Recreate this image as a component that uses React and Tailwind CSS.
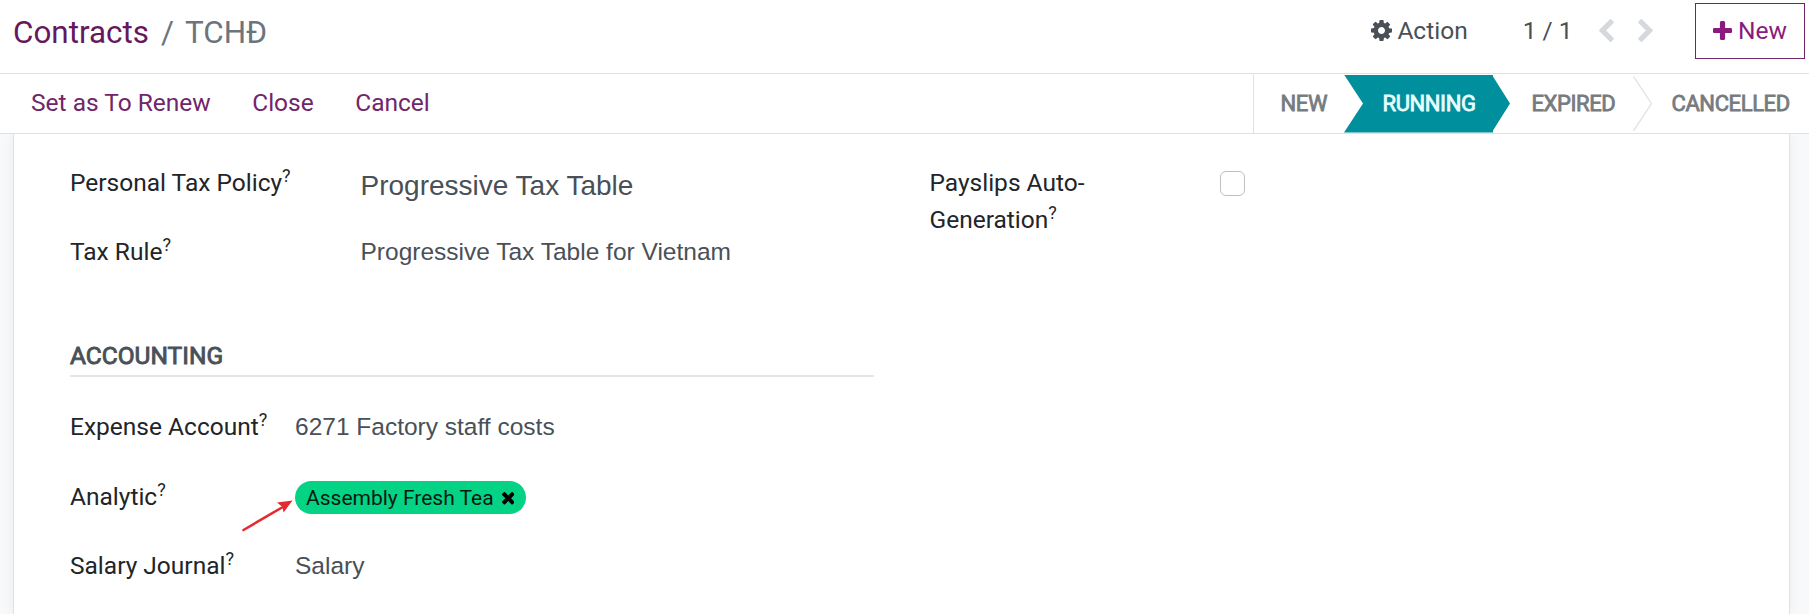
const icons = {
  cog: {
    viewBox: '128 128 1536 1536',
    d: 'M1152 896q0-106-75-181t-181-75-181 75-75 181 75 181 181 75 181-75 75-181zm512-109v222q0 12-8 23t-20 13l-185 28q-19 54-39 91 35 50 107 138 10 12 10 25t-9 23q-27 37-99 108t-94 71q-12 0-26-9l-138-108q-44 23-91 38-16 136-29 186-7 28-36 28h-222q-14 0-24.5-8.5t-11.5-21.5l-28-184q-49-16-90-37l-141 107q-10 9-25 9-14 0-25-11-126-114-165-168-7-10-7-23 0-12 8-23 15-21 51-66.5t54-70.5q-27-50-41-99l-183-27q-13-2-21-12.5t-8-23.5v-222q0-12 8-23t19-13l186-28q14-46 39-92-40-57-107-138-10-12-10-24 0-10 9-23 26-36 98.5-107.5t94.5-71.5q13 0 26 10l138 107q44-23 91-38 16-136 29-186 7-28 36-28h222q14 0 24.5 8.5t11.5 21.5l28 184q49 16 90 37l142-107q9-9 24-9 13 0 25 10 129 119 165 170 7 8 7 22 0 12-8 23-15 21-51 66.5t-54 70.5q26 50 41 98l183 28q13 2 21 12.5t8 23.5z',
  },
  plus: {
    viewBox: '192 128 1408 1408',
    d: 'M1600 736v192q0 40-28 68t-68 28h-416v416q0 40-28 68t-68 28h-192q-40 0-68-28t-28-68v-416h-416q-40 0-68-28t-28-68v-192q0-40 28-68t68-28h416v-416q0-40 28-68t68-28h192q40 0 68 28t28 68v416h416q40 0 68 28t28 68z',
  },
  times: {
    viewBox: '302 366 1188 1188',
    d: 'M1490 1322q0 40-28 68l-136 136q-28 28-68 28t-68-28l-294-294-294 294q-28 28-68 28t-68-28l-136-136q-28-28-28-68t28-68l294-294-294-294q-28-28-28-68t28-68l136-136q28-28 68-28t68 28l294 294 294-294q28-28 68-28t68 28l136 136q28 28 28 68t-28 68l-294 294 294 294q28 28 28 68z',
  },
  left: {
    viewBox: '410 26 1036 1612',
    d: 'M1427 301l-531 531 531 531q19 19 19 45t-19 45l-166 166q-19 19-45 19t-45-19l-742-742q-19-19-19-45t19-45l742-742q19-19 45-19t45 19l166 166q19 19 19 45t-19 45z',
  },
  right: {
    viewBox: '346 26 1036 1612',
    d: 'M1363 877l-742 742q-19 19-45 19t-45-19l-166-166q-19-19-19-45t19-45l531-531-531-531q-19-19-19-45t19-45l166-166q19-19 45-19t45 19l742 742q19 19 19 45t-19 45z',
  },
};

const Icon = ({ name, className }) => (
  <svg viewBox={icons[name].viewBox} className={`shrink-0 ${className}`} fill="currentColor" aria-hidden="true">
    <path d={icons[name].d} />
  </svg>
);

const Help = () => <sup className="relative top-[-9px] align-baseline text-[18px] leading-none">?</sup>;

const Field = ({ label, labelWidth, height = 'h-[69.5px]', children }) => (
  <div className={`flex items-start ${height}`}>
    <div className={`shrink-0 whitespace-nowrap text-[#212529] ${labelWidth}`}>
      {label}
      <Help />
    </div>
    {children}
  </div>
);

const Value = ({ className = 'text-[24.5px]', children }) => (
  <span className={`whitespace-nowrap font-['Liberation_Sans',sans-serif] text-[#495057] ${className}`}>
    {children}
  </span>
);

const ControlPanel = () => (
  <header className="flex h-[74px] shrink-0 justify-between border-b border-[#dee2e6]">
    <div className="flex pl-[13px] pt-[12px] text-[31.4px] leading-[41px]">
      <a className="text-[#66185e]">Contracts</a>
      <span className="pl-[12px] pr-[11px] text-[#6c757d]">/</span>
      <span className="text-[#6c757d]">TCHĐ</span>
    </div>
    <div className="flex h-[61px] items-center pr-[4px] text-[#495057]">
      <button className="flex items-center gap-[5px]">
        <Icon name="cog" className="size-[21px]" />
        Action
      </button>
      <span className="ml-[55px]">1 / 1</span>
      <div className="ml-[26px] flex gap-[24px] text-[#d5d8dc]">
        <Icon name="left" className="h-[23px] w-[15px]" />
        <Icon name="right" className="h-[23px] w-[15px]" />
      </div>
      <button className="ml-[42.5px] flex h-[56px] w-[110px] items-center gap-[6px] border border-[#71256b] pl-[17px] text-[#8a1a7d]">
        <Icon name="plus" className="size-[19px]" />
        New
      </button>
    </div>
  </header>
);

const StatusBar = () => (
  <div className="flex h-[60px] shrink-0 justify-between border-b border-[#dee2e6]">
    <div className="flex items-center gap-[41.5px] pb-[2px] pl-[31px] text-[#71256b]">
      <button>Set as To Renew</button>
      <button>Close</button>
      <button>Cancel</button>
    </div>
    <div className="flex items-center border-l border-[#dee2e6] text-[22px] tracking-[-0.4px] text-[#767b80] [-webkit-text-stroke:0.8px_currentColor]">
      <span className="w-[90px] pl-[26.5px]">NEW</span>
      <div className="flex h-[58px] w-[167px] items-center bg-[#008f9c] pl-[38.5px] text-[#e8ffff] [clip-path:polygon(0_0,149px_0,149px_2px,166px_50%,149px_56px,149px_100%,0_100%,19px_50%)]">
        RUNNING
      </div>
      <span className="w-[122px] pl-[20.5px]">EXPIRED</span>
      <svg width="20" height="57" className="shrink-0" fill="none" stroke="#dee2e6" strokeWidth="1.3">
        <path d="M0.5 1.5L18.5 28.5L0.5 56" />
      </svg>
      <span className="w-[156px] pl-[18.5px]">CANCELLED</span>
    </div>
  </div>
);

export default function App() {
  return (
    <div className="flex h-[614px] w-[1809px] flex-col overflow-hidden bg-white font-['Roboto',sans-serif] text-[24.5px] leading-[37px]">
      <ControlPanel />
      <StatusBar />
      <main className="flex flex-1 overflow-hidden bg-[#f8f9fa] pl-[13px] pr-[19px]">
        <div className="flex-1 border-x border-[#dee2e6] bg-white pl-[56px] pt-[30px] shadow-[0_0_12px_rgba(0,0,0,0.06)]">
          <div className="flex h-[172px]">
            <div className="w-[859.5px]">
              <Field label="Personal Tax Policy" labelWidth="w-[290.5px]" height="h-[68.5px]">
                <Value className="pt-[3px] text-[28px]">Progressive Tax Table</Value>
              </Field>
              <Field label="Tax Rule" labelWidth="w-[290.5px]">
                <Value>Progressive Tax Table for Vietnam</Value>
              </Field>
            </div>
            <div className="w-[290.5px] text-[#212529]">
              Payslips Auto-
              <br />
              Generation
              <Help />
            </div>
            <div className="mt-[7px] size-[25px] rounded-[6px] border border-[#bfbfbf]" />
          </div>
          <h2 className="h-[41px] w-[804px] border-b-2 border-[#e2e4e7] pt-px text-[#495057] [-webkit-text-stroke:0.9px_currentColor]">
            ACCOUNTING
          </h2>
          <div className="mt-[31px]">
            <Field label="Expense Account" labelWidth="w-[225px]">
              <Value>6271 Factory staff costs</Value>
            </Field>
            <Field label="Analytic" labelWidth="w-[225px]">
              <div className="relative mt-[3px] flex h-[33px] w-[231px] items-center gap-[8px] rounded-full bg-[#04d386] pl-[11px] text-[21px] text-[#061a10]">
                <span className="whitespace-nowrap pt-[2px]">Assembly Fresh Tea</span>
                <Icon name="times" className="mt-[3px] size-[12.5px] text-black" />
                {/* pointer to the analytic tag */}
                <svg className="absolute left-[-54px] top-[17px]" width="54" height="36">
                  <path d="M2.5 32L41 9.5" stroke="#e52b30" strokeWidth="2.6" strokeLinecap="round" />
                  <path d="M51.5 2.5L42.5 14.5L41.5 9L36 4.5Z" fill="#e52b30" />
                </svg>
              </div>
            </Field>
            <Field label="Salary Journal" labelWidth="w-[225px]">
              <Value>Salary</Value>
            </Field>
          </div>
        </div>
      </main>
    </div>
  );
}
